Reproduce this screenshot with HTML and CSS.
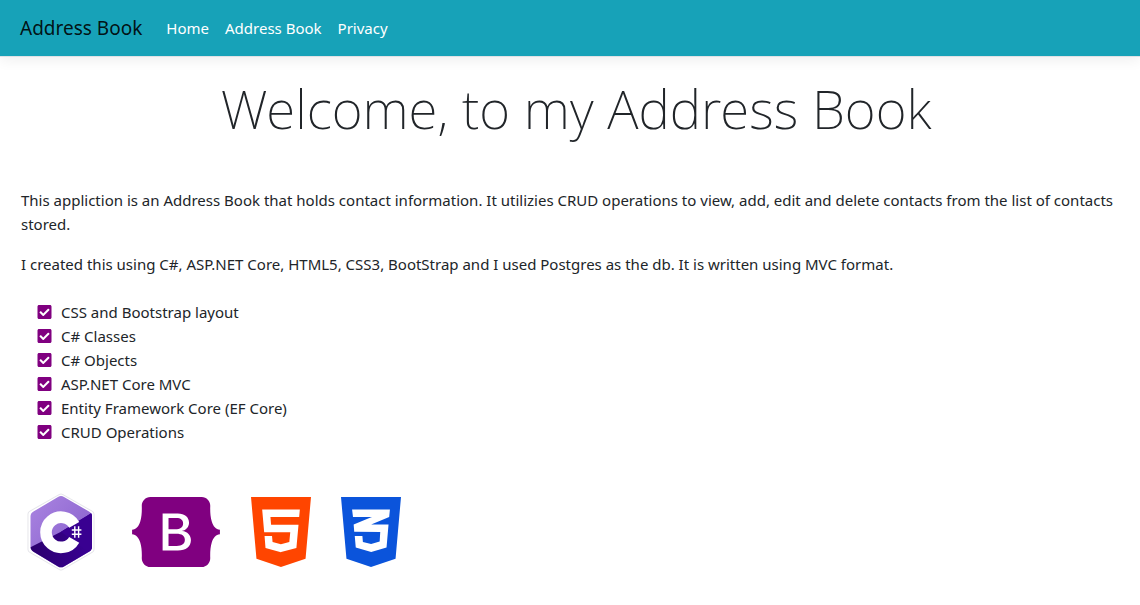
FILE: index.html
```html
<!DOCTYPE html>
<html lang="en">
<head>
<meta charset="utf-8">
<meta name="viewport" content="width=device-width, initial-scale=1">
<title>Address Book</title>
<link rel="stylesheet" href="styles.css">
</head>
<body>
<svg class="sprite" aria-hidden="true">
  <symbol id="check" viewBox="0 0 448 512"><path d="M400 480H48c-26.51 0-48-21.49-48-48V80c0-26.51 21.49-48 48-48h352c26.51 0 48 21.49 48 48v352c0 26.51-21.49 48-48 48zm-204.686-98.059l184-184c6.248-6.248 6.248-16.379 0-22.627l-22.627-22.627c-6.248-6.248-16.379-6.249-22.628 0L184 302.745l-70.059-70.059c-6.248-6.248-16.379-6.248-22.628 0l-22.627 22.627c-6.248 6.248-6.248 16.379 0 22.627l104 104c6.249 6.25 16.379 6.25 22.628.001z"/></symbol>
</svg>
<header class="navbar">
  <a class="brand" href="#">Address Book</a>
  <nav class="nav">
    <a class="nav-link" href="#">Home</a>
    <a class="nav-link" href="#">Address Book</a>
    <a class="nav-link" href="#">Privacy</a>
  </nav>
</header>
<main class="content">
  <h1 class="title">Welcome, to my Address Book</h1>
  <p class="text">This appliction is an Address Book that holds contact information. It utilizies CRUD operations to view, add, edit and delete contacts from the list of contacts stored.</p>
  <p class="text">I created this using C#, ASP.NET Core, HTML5, CSS3, BootStrap and I used Postgres as the db. It is written using MVC format.</p>
  <ul class="features">
    <li class="feature"><svg class="check"><use href="#check"/></svg>CSS and Bootstrap layout</li>
    <li class="feature"><svg class="check"><use href="#check"/></svg>C# Classes</li>
    <li class="feature"><svg class="check"><use href="#check"/></svg>C# Objects</li>
    <li class="feature"><svg class="check"><use href="#check"/></svg>ASP.NET Core MVC</li>
    <li class="feature"><svg class="check"><use href="#check"/></svg>Entity Framework Core (EF Core)</li>
    <li class="feature"><svg class="check"><use href="#check"/></svg>CRUD Operations</li>
  </ul>
  <div class="logos">
    <svg class="logo logo-csharp" viewBox="1 7 80 80" role="img" aria-label="C#">
      <defs>
        <linearGradient id="light" x1="0" y1="0" x2="1" y2="1"><stop offset="0" stop-color="#ac86e2"/><stop offset="1" stop-color="#8059c8"/></linearGradient>
        <linearGradient id="dark" x1="0" y1="0" x2="1" y2="0"><stop offset="0" stop-color="#2b006c"/><stop offset="1" stop-color="#3a0096"/></linearGradient>
        <clipPath id="hex"><path d="M38 12Q41 10.200 44 12L69 26.500Q72 28.200 72 31.500V61.500Q72 65 69 66.800L44 81.500Q41 83.200 38 81.500L13.500 66.800Q10.500 65 10.500 61.500V31.500Q10.500 28.200 13.500 26.500Z"/></clipPath>
      </defs>
      <path d="M41 12L71 29V64.500L41 82L11 64.500V29Z" fill="#e6e6ea" stroke="#e6e6ea" stroke-width="7" stroke-linejoin="round"/>
      <path d="M41 12L71 29V64.500L41 82L11 64.500V29Z" fill="#fff" stroke="#fff" stroke-width="5" stroke-linejoin="round"/>
      <g clip-path="url(#hex)">
        <path d="M8 8H74V86H8Z" fill="url(#light)"/>
        <path d="M8 63.500L41 46.700L74 26.500V86H8Z" fill="url(#dark)"/>
        <path d="M41 46.700L74 26.500V65L68 67Z" fill="#390091"/>
      </g>
      <path d="M54.200 39.800A15.100 15.100 0 1 0 54.200 54.800" fill="none" stroke="#fff" stroke-width="11.600"/>
      <path d="M54.800 41.300V52.700M58.600 41.300V52.700M51.800 45H61.400M51.800 49.200H61.400" fill="none" stroke="#fff" stroke-width="1.400"/>
    </svg>
    <svg class="logo logo-bootstrap" viewBox="0 0 576 512" role="img" aria-label="Bootstrap"><path d="M333.5,201.4c0-22.1-15.6-34.3-43-34.3h-50.4v71.2h42.5C315.4,238.2,333.5,225,333.5,201.4z M517,188.6c-9.5-30.9-10.9-68.8-9.8-98.1c1.1-30.5-22.7-58.5-54.7-58.5H123.7c-32.1,0-55.8,28.1-54.7,58.5c1,29.3-0.3,67.2-9.8,98.1c-9.6,31-25.7,50.6-52.2,53.1v28.5c26.4,2.5,42.6,22.1,52.2,53.1c9.5,30.9,10.9,68.8,9.8,98.1c-1.1,30.5,22.7,58.5,54.7,58.5h328.7c32.1,0,55.8-28.1,54.7-58.5c-1-29.3,0.3-67.2,9.8-98.1c9.6-31,25.7-50.6,52.1-53.1v-28.5C542.7,239.2,526.5,219.6,517,188.6z M300.2,375.1h-97.9V136.8h97.4c43.3,0,71.7,23.4,71.7,59.4c0,25.3-19.1,47.9-43.5,51.8v1.3c33.2,3.600,55.5,26.6,55.5,58.3C383.4,349.7,352.1,375.1,300.2,375.1z M290.2,266.4h-50.1v78.4h52.3c34.2,0,52.3-13.7,52.3-39.5C344.7,279.6,326.1,266.4,290.2,266.4z"/></svg>
    <svg class="logo logo-html" viewBox="0 0 384 512" role="img" aria-label="HTML5"><path d="M0 32l34.900 395.800L191.500 480l157.600-52.200L384 32H0zm308.200 127.900H124.400l4.100 49.400h175.600l-13.600 148.400-97.900 27v.3h-1.100l-98.700-27.300-6-75.800h47.700L138 320l53.500 14.500 53.700-14.500 6-62.200H84.300L71.500 112.200h241.100l-4.400 47.700z"/></svg>
    <svg class="logo logo-css" viewBox="0 0 384 512" role="img" aria-label="CSS3"><path d="M0 32l34.900 395.800L192 480l157.100-52.200L384 32H0zm313.100 80l-4.800 47.300L193 208.600l-.3.1h111.500l-12.800 146.600-98.200 28.700-98.800-29.200-6.400-73.900h48.900l3.200 38.300 52.600 13.300 54.700-15.400 3.700-61.600-166.300-.5v-.1l-.2.1-3.600-46.300L193.100 162l6.500-2.700H76.700L70.900 112h242.200z"/></svg>
  </div>
</main>
</body>
</html>
```
FILE: styles.css
```css
* { box-sizing: border-box; }
body {
  margin: 0;
  background: #fff;
  color: #212529;
  font: 15px/24px "Segoe UI", "Noto Sans", "Open Sans", sans-serif;
}
.sprite { display: none; }
.navbar {
  display: flex;
  align-items: center;
  gap: 24px;
  padding: 8px 20px;
  min-height: 57px;
  background: #17a2b8;
  border-bottom: 1px solid #dee2e6;
  box-shadow: 0 4px 12px rgba(0, 0, 0, 0.06);
}
.brand {
  color: rgba(0, 0, 0, 0.9);
  font-size: 19px;
  text-decoration: none;
}
.nav { display: flex; gap: 16px; }
.nav-link { color: #fff; text-decoration: none; }
.content { padding: 18px 21px; }
.title {
  margin: 0 0 46px;
  padding-left: 12px;
  font-size: 53px;
  font-weight: 250;
  line-height: 67px;
  text-align: center;
}
.text { margin: 0 0 16px; }
.features {
  margin: 24px 0 48px;
  padding: 0 0 0 16px;
  list-style: none;
}
.feature { display: flex; align-items: center; gap: 9px; }
.check { width: 15px; height: 16px; fill: purple; }
.logos { display: flex; align-items: center; gap: 30px; }
.logo { height: 80px; }
.logo-csharp { width: 80px; }
.logo-bootstrap { width: 90px; fill: purple; }
.logo-html { width: 60px; fill: #ff4500; }
.logo-css { width: 60px; fill: #0b54db; }
```
